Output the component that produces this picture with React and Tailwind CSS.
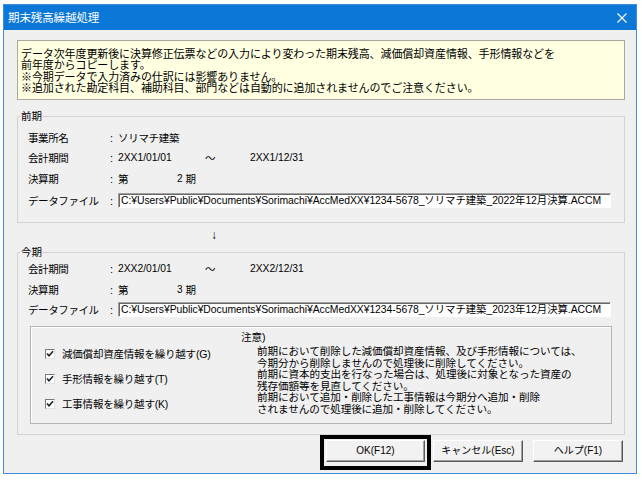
import React from 'react';

const FONT = "font-['Liberation_Sans','Noto_Sans_CJK_JP',sans-serif]";

const Label = ({ children }) => (
  <span className="w-[92px] pl-[10px] text-[10.5px] leading-[14px] tracking-[-0.4px] whitespace-nowrap">
    {children}
  </span>
);

const Colon = () => <span className="w-[8px] text-[11px] leading-[14px]">:</span>;

const PathBox = ({ path }) => (
  <div className="w-[493px] h-[15px] bg-white border-t border-l border-t-[#a0a0a0] border-l-[#a0a0a0] border-b border-r border-b-white border-r-white shadow-[inset_1px_1px_0_#696969] overflow-hidden whitespace-nowrap pl-[2px] text-[10.4px] leading-[14px] tracking-[-0.05px]">
    {path}
  </div>
);

const Period = ({ from, to }) => (
  <div className="flex items-center text-[10.3px] leading-[14px]">
    <span className="w-[87px]">{from}</span>
    <span className="w-[45px] text-[10.5px]">～</span>
    <span>{to}</span>
  </div>
);

const Term = ({ n }) => (
  <div className="flex items-center text-[10.5px] leading-[14px]">
    <span className="w-[59px]">第</span>
    <span className="text-[10px]">{n}</span>
    <span className="ml-[3px]">期</span>
  </div>
);

const Check = ({ label }) => (
  <div className="h-[25px] flex items-center">
    <span className="w-[10px] h-[10px] bg-white border border-t-[#7a7a7a] border-l-[#7a7a7a] border-b-[#e0e0e0] border-r-[#e0e0e0] flex items-center justify-center">
      <svg width="8" height="8" viewBox="0 0 8 8">
        <path d="M1 3.5 L3 5.8 L7 1.2" fill="none" stroke="#222" strokeWidth="1.6" />
      </svg>
    </span>
    <span className="ml-[7px] text-[10.5px] leading-[14px] tracking-[-0.2px] whitespace-nowrap">{label}</span>
  </div>
);

const Button = ({ children, className = '' }) => (
  <div
    className={`h-[22px] flex items-center justify-center bg-[#f2f2f2] border border-t-white border-l-white border-b-[#5a5a5a] border-r-[#5a5a5a] shadow-[inset_-1px_-1px_0_#a0a0a0] text-[10px] leading-[14px] ${className}`}
  >
    {children}
  </div>
);

const notes = [
  '前期において削除した減価償却資産情報、及び手形情報については、',
  '今期分から削除しませんので処理後に削除してください。',
  '前期に資本的支出を行なった場合は、処理後に対象となった資産の',
  '残存価額等を見直してください。',
  '前期において追加・削除した工事情報は今期分へ追加・削除',
  'されませんので処理後に追加・削除してください。',
];

export default function App() {
  return (
    <div className={`w-[642px] h-[481px] bg-white pt-[4px] pl-[3px] text-black ${FONT}`}>
      <div className="w-[634px] h-[470px] border border-[#3f8cd8] bg-[#f0f0f0] flex flex-col">
        <div className="h-[25px] shrink-0 bg-[#0b78d7] flex items-center justify-between pl-[4px] pr-[9px] text-white">
          <span className="text-[11.5px] leading-[14px] tracking-[-0.1px]">期末残高繰越処理</span>
          <svg width="10" height="10" viewBox="0 0 10 10">
            <path d="M0.5 0.5 L9.5 9.5 M9.5 0.5 L0.5 9.5" stroke="white" strokeWidth="1.1" />
          </svg>
        </div>

        <div className="mt-[10px] ml-[13px] w-[608px] h-[60px] shrink-0 bg-[#ffffe1] border border-[#a9a99a] pt-[8px] pl-[3px] text-[11px] leading-[11.3px] tracking-[-0.1px] whitespace-nowrap">
          <div>データ次年度更新後に決算修正伝票などの入力により変わった期末残高、減価償却資産情報、手形情報などを</div>
          <div>前年度からコピーします。</div>
          <div>※今期データで入力済みの仕訳には影響ありません。</div>
          <div>※追加された勘定科目、補助科目、部門などは自動的に追加されませんのでご注意ください。</div>
        </div>

        <fieldset className="mt-[10px] ml-[13px] w-[608px] h-[113px] shrink-0 border border-[#d3d3d3]">
          <legend className="ml-[2px] px-[1px] text-[10.5px] leading-[12px]">前期</legend>
          <div className="pt-[6px]">
            <div className="h-[20px] flex items-center">
              <Label>事業所名</Label>
              <Colon />
              <span className="text-[10.5px] leading-[14px] tracking-[-0.3px]">ソリマチ建築</span>
            </div>
            <div className="h-[20px] flex items-center">
              <Label>会計期間</Label>
              <Colon />
              <Period from="2XX1/01/01" to="2XX1/12/31" />
            </div>
            <div className="h-[22px] flex items-center">
              <Label>決算期</Label>
              <Colon />
              <Term n="2" />
            </div>
            <div className="h-[21px] flex items-center">
              <Label>データファイル</Label>
              <Colon />
              <PathBox path="C:¥Users¥Public¥Documents¥Sorimachi¥AccMedXX¥1234-5678_ソリマチ建築_2022年12月決算.ACCM" />
            </div>
          </div>
        </fieldset>

        <div className="h-[23px] shrink-0 flex items-center pl-[207px] text-[12px] leading-[14px]">↓</div>

        <fieldset className="ml-[13px] w-[608px] h-[189px] shrink-0 border border-[#d3d3d3]">
          <legend className="ml-[2px] px-[1px] text-[10.5px] leading-[12px]">今期</legend>
          <div className="pt-[1px]">
            <div className="h-[20px] flex items-center">
              <Label>会計期間</Label>
              <Colon />
              <Period from="2XX2/01/01" to="2XX2/12/31" />
            </div>
            <div className="h-[21px] flex items-center">
              <Label>決算期</Label>
              <Colon />
              <Term n="3" />
            </div>
            <div className="h-[19px] flex items-center">
              <Label>データファイル</Label>
              <Colon />
              <PathBox path="C:¥Users¥Public¥Documents¥Sorimachi¥AccMedXX¥1234-5678_ソリマチ建築_2023年12月決算.ACCM" />
            </div>
          </div>

          <div className="mt-[7px] ml-[12px] w-[582px] h-[98px] border border-[#b4b4b4] shadow-[inset_1px_1px_0_#fff] flex">
            <div className="w-[210px] pt-[14px] pl-[14px]">
              <Check label="減価償却資産情報を繰り越す(G)" />
              <Check label="手形情報を繰り越す(T)" />
              <Check label="工事情報を繰り越す(K)" />
            </div>
            <div className="pt-[5px] text-[10.6px] whitespace-nowrap tracking-[-0.1px]">
              <div className="leading-[11.5px]">注意)</div>
              <div className="mt-[2.5px] pl-[16px] leading-[11.5px]">
                {notes.map((line) => (
                  <div key={line}>{line}</div>
                ))}
              </div>
            </div>
          </div>
        </fieldset>

        <div className="flex items-start pl-[316px]">
          <div className="w-[111px] h-[35px] border-4 border-black pl-[2px] pt-[1px]">
            <Button className="w-[99px]">OK(F12)</Button>
          </div>
          <Button className="w-[90px] ml-[2px] mt-[5px]">キャンセル(Esc)</Button>
          <Button className="w-[90px] ml-[10px] mt-[5px]">ヘルプ(F1)</Button>
        </div>
      </div>
    </div>
  );
}
